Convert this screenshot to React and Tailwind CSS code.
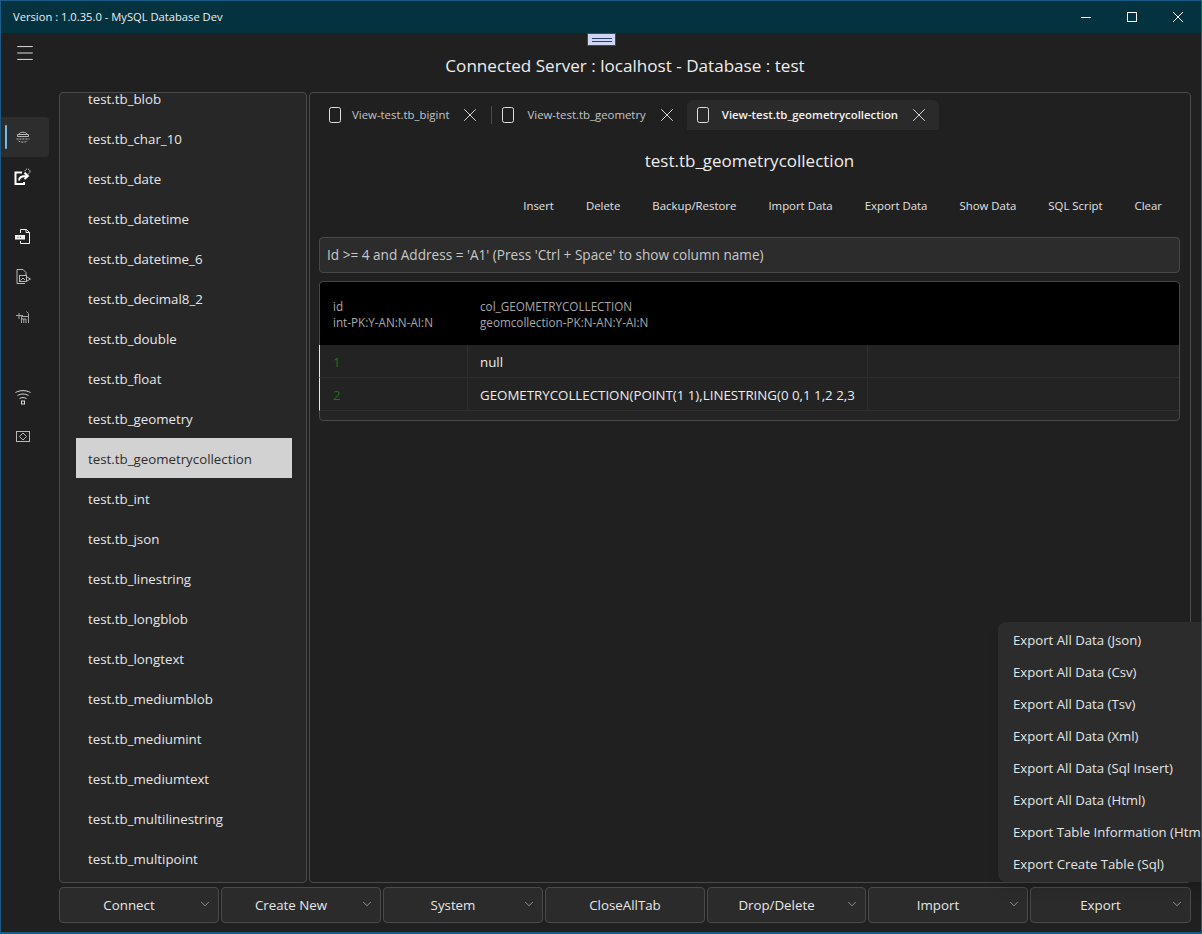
import React from 'react';
import { ChevronDown, X, Menu } from 'lucide-react';

const tables = [
    'test.tb_blob', 'test.tb_char_10', 'test.tb_date', 'test.tb_datetime', 'test.tb_datetime_6',
    'test.tb_decimal8_2', 'test.tb_double', 'test.tb_float', 'test.tb_geometry', 'test.tb_geometrycollection',
    'test.tb_int', 'test.tb_json', 'test.tb_linestring', 'test.tb_longblob', 'test.tb_longtext',
    'test.tb_mediumblob', 'test.tb_mediumint', 'test.tb_mediumtext', 'test.tb_multilinestring', 'test.tb_multipoint',
];

const actions = ['Insert', 'Delete', 'Backup/Restore', 'Import Data', 'Export Data', 'Show Data', 'SQL Script', 'Clear'];

const exportItems = [
    'Export All Data (Json)', 'Export All Data (Csv)', 'Export All Data (Tsv)', 'Export All Data (Xml)',
    'Export All Data (Sql Insert)', 'Export All Data (Html)', 'Export Table Information (Html)', 'Export Create Table (Sql)',
];

const footerButtons = [
    { label: 'Connect', w: 'w-[160px]', menu: true },
    { label: 'Create New', w: 'w-[160px]', menu: true },
    { label: 'System', w: 'w-[160px]', menu: true },
    { label: 'CloseAllTab', w: 'w-[160px]', menu: false },
    { label: 'Drop/Delete', w: 'w-[159px]', menu: true },
    { label: 'Import', w: 'w-[160px]', menu: true },
    { label: 'Export', w: 'w-[161px]', menu: true },
];

function RailIcon({ children, active }) {
    return (
        <div className={`relative flex h-10 w-12 items-center justify-center pr-[5px] ${active ? 'rounded-r bg-[#2d2d2d]' : ''}`}>
            {active && <div className="absolute left-1 top-2 h-6 w-[2px] rounded bg-[#76b9ed]" />}
            {children}
        </div>
    );
}

function Glyph({ children, color = '#b8b8b8' }) {
    return (
        <svg width="18" height="18" viewBox="0 0 18 18" fill="none" stroke={color} strokeWidth="1">
            {children}
        </svg>
    );
}

function Tab({ label, active, separator }) {
    return (
        <div className={`flex h-[30px] items-center ${active ? 'rounded-t-md bg-[#2a2a2a] font-semibold text-[#f2f2f2]' : 'text-[#c4c4c4]'}`}>
            <svg className="ml-[9px] shrink-0" width="14" height="18" viewBox="0 0 14 18" fill="none" stroke="#e0e0e0">
                <rect x="1.5" y="1.5" width="11" height="15" rx="2" />
            </svg>
            <span className={`${separator ? 'ml-[10px]' : 'ml-[12px]'} whitespace-nowrap text-[11.4px]`}>{label}</span>
            <X className="ml-[10px] mr-[9px] text-[#e6e6e6]" size={22} strokeWidth={1} />
            {separator && <div className="ml-px h-[18px] w-px bg-[#4c4c4c]" />}
        </div>
    );
}

export default function App() {
    return (
        <div className="relative flex h-[934px] w-[1202px] flex-col overflow-hidden border border-b-[2px] border-[#1a5a86] bg-[#202020] text-[#e6e6e6] font-['Open_Sans',sans-serif]">
            {/* title bar */}
            <div className="flex h-[32px] shrink-0 items-center justify-between bg-[#04333f]">
                <span className="ml-3 text-[11.2px] text-[#e8eef0]">Version : 1.0.35.0 - MySQL Database Dev</span>
                <div className="flex items-center text-white">
                    <svg className="mr-[34px]" width="12" height="12" viewBox="0 0 12 12" stroke="currentColor"><path d="M1 6.500h10" /></svg>
                    <svg className="mr-[34px]" width="12" height="12" viewBox="0 0 12 12" fill="none" stroke="currentColor"><rect x="1.500" y="1.500" width="9" height="9" /></svg>
                    <svg className="mr-[17px]" width="12" height="12" viewBox="0 0 12 12" stroke="currentColor"><path d="M1 1l10 10M11 1L1 11" /></svg>
                </div>
            </div>

            {/* grip that hangs from the title bar */}
            <div className="absolute left-[586px] top-[32px] flex h-[13px] w-[29px] flex-col items-center justify-center gap-[2px] border border-[#3c4668] bg-[#cfd6f2]">
                <div className="h-px w-5 bg-[#2c3a6c]" />
                <div className="h-px w-5 bg-[#2c3a6c]" />
            </div>

            <div className="flex min-h-0 flex-1">
                {/* left rail */}
                <div className="flex w-[58px] shrink-0 flex-col">
                    <div className="ml-[13px] mt-[9px] flex h-[22px] w-[22px] items-center justify-center text-[#f0f0f0]">
                        <Menu size={22} strokeWidth={1} />
                    </div>
                    <div className="mt-[53px]">
                        <RailIcon active>
                            <Glyph>
                                <path d="M5 6.500c0-3 8-3 8 0" />
                                <path d="M3.500 6.500h11v2h-11z" />
                                <path d="M2.500 11h13" strokeDasharray="2 1" />
                                <path d="M4.500 13c2.500 1.500 6.500 1.500 9 0" strokeDasharray="2 1" />
                            </Glyph>
                        </RailIcon>
                        <RailIcon>
                            <Glyph color="#ffffff">
                                <path d="M8 4.500H1.500v11.500h8.500v-2" strokeWidth="2" />
                                <path d="M5 12.500c0-3 3-4.500 7.500-4.500M10.500 5l3.500 3-3.500 3" strokeWidth="1.800" />
                                <circle cx="13.500" cy="3.500" r="2.500" strokeDasharray="1 1" />
                            </Glyph>
                        </RailIcon>
                    </div>
                    <div className="mt-[20px]">
                        <RailIcon>
                            <Glyph color="#f0f0f0">
                                <path d="M6.500 5V1.500h6l3 3v11h-9V13" />
                                <path d="M12 1.500v3h3.500" />
                                <rect x="1.500" y="7.500" width="9" height="3.500" fill="#f0f0f0" />
                                <path d="M3.500 9.200h1M6 9.200h1" stroke="#202020" />
                            </Glyph>
                        </RailIcon>
                        <RailIcon>
                            <Glyph>
                                <path d="M3 15.500V1.500h6l3 3v3M3 15.500h8" />
                                <rect x="5.500" y="7.500" width="7" height="6" />
                                <path d="M13 9l3.500 2-3.500 2M6.500 12.500l2.500-2.500 2 2" />
                            </Glyph>
                        </RailIcon>
                        <RailIcon>
                            <Glyph color="#a8a8a8">
                                <path d="M7.500 15V8.500h6.500M7.500 11h4.500v4M9.800 11v4M14.500 15V5.500l-2-2M2 7.500h7M5 5v6" />
                            </Glyph>
                        </RailIcon>
                    </div>
                    <div className="mt-[40px]">
                        <RailIcon>
                            <Glyph color="#d8d8d8">
                                <path d="M1.500 4.500c4.500-2.500 10.500-2.500 15 0M3.500 7.500c3.500-2 7.500-2 11 0M5.500 10.500c2-1.200 5-1.200 7 0" />
                                <rect x="7.500" y="13" width="3" height="3" />
                            </Glyph>
                        </RailIcon>
                        <RailIcon>
                            <Glyph>
                                <rect x="2.500" y="3.500" width="13" height="10" />
                                <path d="M9 5l3.500 3.500L9 12 5.500 8.500z" />
                            </Glyph>
                        </RailIcon>
                    </div>
                </div>

                <div className="flex min-w-0 flex-1 flex-col">
                    <div className="flex h-[59px] shrink-0 items-center justify-center pr-[10px] pt-[6px] text-[17.1px] text-[#ededed]">
                        Connected Server : localhost - Database : test
                    </div>

                    <div className="flex min-h-0 flex-1 gap-[2px] pr-[10px]">
                        {/* table list */}
                        <div className="w-[248px] shrink-0 overflow-hidden rounded border border-[#4a4a4a] bg-[#272727]">
                            <div className="mt-[-15px] flex flex-col pl-4 pr-[14px]">
                                {tables.map((t) => (
                                    <div
                                        key={t}
                                        className={`flex h-10 shrink-0 items-center px-3 pt-[3px] text-[13.3px] ${t === 'test.tb_geometrycollection' ? 'bg-[#d2d2d2] text-[#2e2e2e]' : 'text-[#e6e6e6]'}`}
                                    >
                                        {t}
                                    </div>
                                ))}
                            </div>
                        </div>

                        {/* main panel */}
                        <div className="flex min-w-0 flex-1 flex-col rounded border border-[#4a4a4a] bg-[#202020] pl-[9px] pr-[10px]">
                            <div className="mt-[7px] flex items-center">
                                <Tab label="View-test.tb_bigint" separator />
                                <Tab label="View-test.tb_geometry" />
                                <Tab label="View-test.tb_geometrycollection" active />
                            </div>
                            <div className="mt-[18px] text-center text-[17px] text-[#ededed]">test.tb_geometrycollection</div>
                            <div className="mt-[24px] flex justify-end gap-[32px] pr-[18px] text-[11.4px] leading-4 text-[#e0e0e0]">
                                {actions.map((a) => (
                                    <span key={a}>{a}</span>
                                ))}
                            </div>
                            <div className="mt-[23px] flex h-9 items-center rounded border border-[#484848] bg-[#2c2c2c] px-[7px] pt-[1px] text-[13.6px] text-[#c8c8c8]">
                                Id &gt;= 4 and Address = 'A1' (Press 'Ctrl + Space' to show column name)
                            </div>
                            <div className="mt-2 h-[140px] rounded border border-[#484848] bg-[#252525]">
                                <div className="flex h-[63px] items-center rounded-t bg-black pt-[2px] text-[11.7px] leading-4 text-[#a8a8a8]">
                                    <div className="w-[160px] pl-[13px]">
                                        <div>id</div>
                                        <div>int-PK:Y-AN:N-AI:N</div>
                                    </div>
                                    <div>
                                        <div>col_GEOMETRYCOLLECTION</div>
                                        <div>geomcollection-PK:N-AN:Y-AI:N</div>
                                    </div>
                                </div>
                                {[
                                    ['1', 'null'],
                                    ['2', 'GEOMETRYCOLLECTION(POINT(1 1),LINESTRING(0 0,1 1,2 2,3'],
                                ].map(([id, value]) => (
                                    <div key={id} className="ml-[-1px] flex h-[33px] border-b border-l border-b-[#2e2e2e] border-l-[#e8e8e8] bg-[#232323] text-[13.3px]">
                                        <div className="flex w-[148px] items-center border-r border-[#2e2e2e] pl-[13px] pt-[5px] text-[#117a11]">{id}</div>
                                        <div className="flex w-[400px] items-center overflow-hidden whitespace-nowrap border-r border-[#2e2e2e] pl-[12px] pt-[5px] text-[#ececec]">{value}</div>
                                    </div>
                                ))}
                            </div>
                        </div>
                    </div>

                    {/* footer */}
                    <div className="flex h-[49px] shrink-0 gap-[2px] pb-[9px] pt-[4px]">
                        {footerButtons.map((b) => (
                            <div key={b.label} className={`relative flex h-9 ${b.w} items-center justify-center rounded border border-[#4a4a4a] bg-[#2b2b2b] pt-[1px] text-[13.3px] text-[#e6e6e6] ${b.menu ? 'pr-[20px]' : ''}`}>
                                {b.label}
                                {b.menu && <ChevronDown className="absolute right-[6px] top-[9px] text-[#bdbdbd]" size={14} strokeWidth={1.2} />}
                            </div>
                        ))}
                    </div>
                </div>
            </div>

            {/* export dropdown */}
            <div className="absolute left-[997px] top-[621px] h-[260px] w-[230px] rounded-lg bg-[#2c2c2c] pb-[2px] pl-[15px] pt-[3px] shadow-lg">
                {exportItems.map((item) => (
                    <div key={item} className="flex h-8 items-center whitespace-nowrap text-[13.2px] text-[#e4e4e4]">{item}</div>
                ))}
            </div>
        </div>
    );
}
